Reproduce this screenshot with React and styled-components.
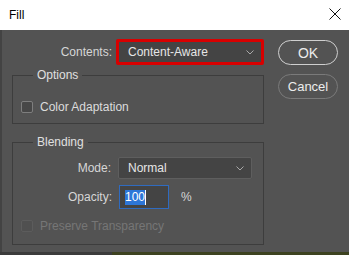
import React from 'react'
import styled, { createGlobalStyle } from 'styled-components'

const GlobalStyle = createGlobalStyle`
  html, body {
    margin: 0;
    padding: 0;
    background: #535353;
  }
  body {
    font-family: "Liberation Sans", Arial, sans-serif;
    font-size: 12px;
  }
`

const Chevron = () => (
  <svg width="8" height="5" viewBox="0 0 8 5">
    <polyline points="0.5,0.5 4,4 7.5,0.5" fill="none" stroke="#a8a8a8" strokeWidth="1" />
  </svg>
)

const CloseIcon = () => (
  <svg width="12" height="12" viewBox="0 0 12 12">
    <path d="M0.5 0.5 L11.5 11.5 M11.5 0.5 L0.5 11.5" stroke="#111" strokeWidth="1" />
  </svg>
)

const App = () => {
  return (
    <>
      <GlobalStyle />
      <Window>
        <TitleBar>
          <Title>Fill</Title>
          <CloseButton>
            <CloseIcon />
          </CloseButton>
        </TitleBar>

        <Body>
          <LeftColumn>
            {/* contents */}
            <ContentsRow>
              <Label width={100}>Contents:</Label>
              <Select highlight>
                <span>Content-Aware</span>
                <Chevron />
              </Select>
            </ContentsRow>

            {/* options */}
            <Group top={2} bottom={10}>
              <Legend>Options</Legend>
              <CheckRow top={17}>
                <Checkbox />
                <CheckLabel>Color Adaptation</CheckLabel>
              </CheckRow>
            </Group>

            {/* blending */}
            <Group top={10} bottom={12}>
              <Legend>Blending</Legend>
              <FieldRow top={7}>
                <Label width={98}>Mode:</Label>
                <Select>
                  <span>Normal</span>
                  <Chevron />
                </Select>
              </FieldRow>
              <FieldRow top={6}>
                <Label width={99}>Opacity:</Label>
                <NumberBox>
                  <Selected>100</Selected>
                  <Caret />
                </NumberBox>
                <Unit>%</Unit>
              </FieldRow>
              <CheckRow top={10}>
                <Checkbox disabled />
                <CheckLabel disabled>Preserve Transparency</CheckLabel>
              </CheckRow>
            </Group>
          </LeftColumn>

          <RightColumn>
            <Button primary>OK</Button>
            <Button>Cancel</Button>
          </RightColumn>
        </Body>
        <Backdrop />
      </Window>
    </>
  )
}

const Window = styled.div`
  width: 349px;
  height: 255px;
  display: flex;
  flex-direction: column;
  background: #535353;
  overflow: hidden;
`

const TitleBar = styled.div`
  height: 30px;
  flex: none;
  background: #ffffff;
  display: flex;
  align-items: center;
  justify-content: space-between;
  padding: 0 8px 0 9px;
`

const Title = styled.div`
  color: #000;
  font-size: 12px;
  margin-top: -1px;
`

const CloseButton = styled.div`
  display: flex;
  margin-top: -2px;
`

const Body = styled.div`
  flex: 1;
  display: flex;
  gap: 14px;
  padding-left: 10px;
  border-left: 2px solid #434343;
`

const LeftColumn = styled.div`
  width: 252px;
  display: flex;
  flex-direction: column;
`

const RightColumn = styled.div`
  width: 60px;
  display: flex;
  flex-direction: column;
  gap: 9px;
  padding-top: 10px;
`

const ContentsRow = styled.div`
  display: flex;
  align-items: center;
  gap: 4px;
  margin-top: 9px;
  height: 26px;
`

const Label = styled.div`
  width: ${(p) => p.width}px;
  flex: none;
  text-align: right;
  color: #d6d6d6;
`

const Select = styled.div`
  box-sizing: border-box;
  width: ${(p) => (p.highlight ? 148 : 134)}px;
  height: ${(p) => (p.highlight ? 26 : 22)}px;
  display: flex;
  align-items: center;
  justify-content: space-between;
  padding: 0 7px 0 9px;
  background: #444444;
  border: ${(p) => (p.highlight ? '3px solid #d80000' : '1px solid #5e5e5e')};
  border-radius: 2px;
  color: #e6e6e6;
  font-size: 12px;
`

const Group = styled.fieldset`
  margin: ${(p) => p.top}px 0 0 0;
  padding: 0 0 ${(p) => p.bottom}px 8px;
  border: 1px solid #3d3d3d;
  width: 252px;
  box-sizing: border-box;
  min-width: 0;
`

const Legend = styled.legend`
  margin-left: 12px;
  padding: 0 4px;
  line-height: 16px;
  color: #e0e0e0;
  font-size: 12px;
`

const CheckRow = styled.div`
  display: flex;
  align-items: center;
  gap: 7px;
  margin-top: ${(p) => p.top}px;
  height: 13px;
`

const Checkbox = styled.div`
  width: 12px;
  height: 12px;
  box-sizing: border-box;
  border: 1px solid ${(p) => (p.disabled ? '#5c5c5c' : '#7e7e7e')};
  background: ${(p) => (p.disabled ? '#505050' : '#474747')};
  border-radius: 2px;
`

const CheckLabel = styled.div`
  color: ${(p) => (p.disabled ? '#767676' : '#dcdcdc')};
`

const FieldRow = styled.div`
  display: flex;
  align-items: center;
  gap: 7px;
  margin-top: ${(p) => p.top}px;
  margin-left: -8px;
`

const NumberBox = styled.div`
  box-sizing: border-box;
  width: 50px;
  height: 24px;
  display: flex;
  align-items: center;
  padding-left: 5px;
  background: #444444;
  border: 1px solid #2f6bc0;
`

const Selected = styled.span`
  background: #2d76d8;
  color: #ffffff;
  line-height: 15px;
`

const Caret = styled.span`
  width: 1px;
  height: 15px;
  background: #ffffff;
`

const Unit = styled.span`
  color: #d6d6d6;
  margin-left: 5px;
`

const Button = styled.div`
  box-sizing: border-box;
  width: 60px;
  height: 25px;
  display: flex;
  align-items: center;
  justify-content: center;
  border-radius: 13px;
  border: ${(p) => (p.primary ? '1.5px solid #cfcfcf' : '1px solid #7a7a7a')};
  color: #ececec;
  font-size: ${(p) => (p.primary ? 14 : 13)}px;
`

const Backdrop = styled.div`
  height: 3px;
  flex: none;
  background: linear-gradient(to right, #3b3b3b 0, #3b3b3b 112px, #3d4220 112px);
`

export default App
